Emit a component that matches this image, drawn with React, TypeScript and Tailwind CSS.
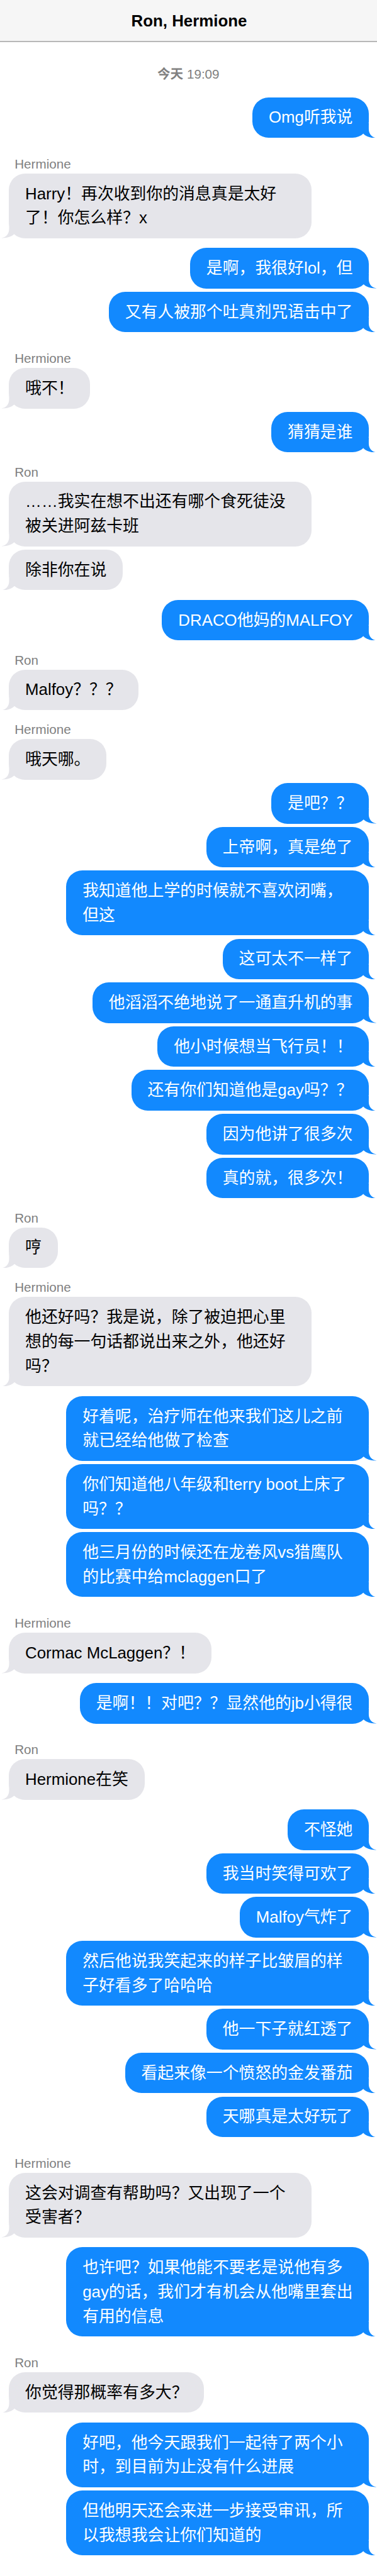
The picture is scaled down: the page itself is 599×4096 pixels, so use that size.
type Message = {
  from: "me" | "Ron" | "Hermione";
  text: string;
  showName?: boolean;
  // spacing above the bubble row
  gap?: "none" | "sm" | "md";
};

const gaps = {
  none: "mt-0",
  sm: "mt-[5.16px]",
  md: "mt-[15.47px]",
};

const messages: Message[] = [
  { from: "me", text: "Omg听我说", gap: "none" },
  { from: "Hermione", text: "Harry！再次收到你的消息真是太好\n了！你怎么样？x", showName: true, gap: "md" },
  { from: "me", text: "是啊，我很好lol，但", gap: "md" },
  { from: "me", text: "又有人被那个吐真剂咒语击中了" },
  { from: "Hermione", text: "哦不！", showName: true, gap: "md" },
  { from: "me", text: "猜猜是谁" },
  { from: "Ron", text: "……我实在想不出还有哪个食死徒没\n被关进阿兹卡班", showName: true },
  { from: "Ron", text: "除非你在说" },
  { from: "me", text: "DRACO他妈的MALFOY", gap: "md" },
  { from: "Ron", text: "Malfoy？？？", showName: true },
  { from: "Hermione", text: "哦天哪。", showName: true },
  { from: "me", text: "是吧？？" },
  { from: "me", text: "上帝啊，真是绝了" },
  { from: "me", text: "我知道他上学的时候就不喜欢闭嘴，\n但这" },
  { from: "me", text: "这可太不一样了" },
  { from: "me", text: "他滔滔不绝地说了一通直升机的事" },
  { from: "me", text: "他小时候想当飞行员！！" },
  { from: "me", text: "还有你们知道他是gay吗？？" },
  { from: "me", text: "因为他讲了很多次" },
  { from: "me", text: "真的就，很多次！" },
  { from: "Ron", text: "哼", showName: true },
  { from: "Hermione", text: "他还好吗？我是说，除了被迫把心里\n想的每一句话都说出来之外，他还好\n吗？", showName: true },
  { from: "me", text: "好着呢，治疗师在他来我们这儿之前\n就已经给他做了检查", gap: "md" },
  { from: "me", text: "你们知道他八年级和terry boot上床了\n吗？？" },
  { from: "me", text: "他三月份的时候还在龙卷风vs猎鹰队\n的比赛中给mclaggen口了" },
  { from: "Hermione", text: "Cormac McLaggen？！", showName: true, gap: "md" },
  { from: "me", text: "是啊！！对吧？？显然他的jb小得很", gap: "md" },
  { from: "Ron", text: "Hermione在笑", showName: true, gap: "md" },
  { from: "me", text: "不怪她", gap: "md" },
  { from: "me", text: "我当时笑得可欢了" },
  { from: "me", text: "Malfoy气炸了" },
  { from: "me", text: "然后他说我笑起来的样子比皱眉的样\n子好看多了哈哈哈" },
  { from: "me", text: "他一下子就红透了" },
  { from: "me", text: "看起来像一个愤怒的金发番茄" },
  { from: "me", text: "天哪真是太好玩了" },
  { from: "Hermione", text: "这会对调查有帮助吗？又出现了一个\n受害者？", showName: true, gap: "md" },
  { from: "me", text: "也许吧？如果他能不要老是说他有多\ngay的话，我们才有机会从他嘴里套出\n有用的信息", gap: "md" },
  { from: "Ron", text: "你觉得那概率有多大？", showName: true, gap: "md" },
  { from: "me", text: "好吧，他今天跟我们一起待了两个小\n时，到目前为止没有什么进展", gap: "md" },
  { from: "me", text: "但他明天还会来进一步接受审讯，所\n以我想我会让你们知道的" },
];

function Tail({ mine }: { mine: boolean }) {
  return (
    <svg
      viewBox="0 0 30 30"
      className={`absolute bottom-0 w-[23.4px] h-[23.4px] ${
        mine ? "right-[-12.5px] fill-[#1289fe]" : "left-[-12.5px] -scale-x-100 fill-[#e5e5ea]"
      }`}
    >
      <path d="M3 0H14V11.5C14 20.5 19 28.5 30 30C19 30.4 9 28 3 21.6Z" />
    </svg>
  );
}

function Bubble({ message }: { message: Message }) {
  const mine = message.from === "me";
  const wrapped = message.text.includes("\n");
  return (
    <div className={`flex flex-col ${mine ? "items-end" : "items-start"} ${gaps[message.gap ?? "sm"]}`}>
      {message.showName && (
        <p className="mt-[10.2px] ml-[9px] text-[20.65px] leading-[31px] text-[#808080]">{message.from}</p>
      )}
      <div
        className={`relative rounded-[1em] px-[1em] py-[12.9px] leading-[38.68px] whitespace-pre ${
          mine ? "bg-[#1289fe] text-white" : "bg-[#e5e5ea] text-black"
        } ${wrapped ? "w-[481px]" : ""}`}
      >
        {message.text}
        <Tail mine={mine} />
      </div>
    </div>
  );
}

export default function App() {
  return (
    <div className="h-[4096px] w-[599px] overflow-hidden bg-white font-['Liberation_Sans','Noto_Sans_CJK_SC',sans-serif] text-[25.85px]">
      {/* Header */}
      <header className="flex h-[67px] items-center justify-center border-b-2 border-[#b8b8b8] bg-[#f6f6f6] pt-[2px] pl-[2px]">
        <h1 className="font-bold leading-[1.5]">Ron, Hermione</h1>
      </header>

      {/* Conversation */}
      <main className="pl-[14.2px] pr-[12.7px]">
        <p className="mt-[34.6px] mb-[22px] pr-[2px] text-center text-[20.65px] leading-[31px] text-[#808080]">
          <span className="font-bold">今天</span> 19:09
        </p>
        {messages.map((message, i) => (
          <Bubble key={i} message={message} />
        ))}
      </main>
    </div>
  );
}
